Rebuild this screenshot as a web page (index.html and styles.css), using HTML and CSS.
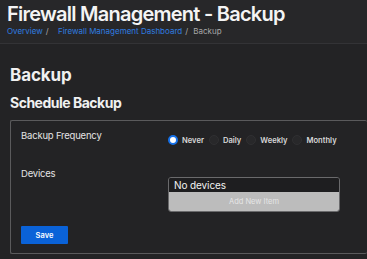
FILE: index.html
```html
<!DOCTYPE html>
<html lang="en">
<head>
    <meta charset="UTF-8">
    <meta name="viewport" content="width=device-width, initial-scale=1.0">
    <title>Firewall Management - Backup</title>
    <link rel="stylesheet" href="styles.css">
</head>
<body>
    <div class="head">
        <h1 class="title">Firewall Management - Backup</h1>
        <div class="crumbs">
            <a class="crumb-link">Overview</a><span class="sep first">/</span>
            <a class="crumb-link">Firewall Management Dashboard</a><span class="sep">/</span>
            <span class="crumb-current">Backup</span>
        </div>
    </div>

    <main class="content">
        <h2 class="page-title">Backup</h2>
        <h3 class="section-title">Schedule Backup</h3>

        <section class="card">
            <div class="row">
                <label class="row-label">Backup Frequency</label>
                <div class="radios">
                    <span class="radio checked"></span><span class="radio-text">Never</span>
                    <span class="radio"></span><span class="radio-text">Daily</span>
                    <span class="radio"></span><span class="radio-text">Weekly</span>
                    <span class="radio"></span><span class="radio-text">Monthly</span>
                </div>
            </div>

            <div class="row devices-row">
                <label class="row-label">Devices</label>
                <div class="device-box">
                    <div class="device-empty">No devices</div>
                    <div class="device-add">Add New Item</div>
                </div>
            </div>

            <button class="save-btn">Save</button>
        </section>
    </main>
</body>
</html>
```

FILE: styles.css
```css
body {
    font-family: Inter, "Liberation Sans", sans-serif;
    margin: 0;
    padding: 0;
    height: 100vh;
    background-color: #232325;
    color: #e8e8e8;
    overflow: hidden;
}
.head {
    background-color: #272729;
    border-bottom: 1px solid #333336;
    padding: 2px 7px 0;
    height: 41px;
}
.title {
    margin: 0;
    font-size: 20px;
    font-weight: 600;
    color: #f4f4f4;
    line-height: 24px;
    letter-spacing: -0.75px;
}
.crumbs {
    font-size: 8px;
    line-height: 10px;
    margin-top: 0;
}
.crumb-link {
    color: #2f7de0;
}
.sep {
    color: #aaa;
    margin: 0 3px 0 3px;
}
.sep.first {
    margin: 0 7px 0 3px;
}
.crumb-current {
    color: #a8a8a8;
}
.content {
    padding: 21px 0 0 10px;
}
.page-title {
    margin: 0;
    font-size: 17px;
    font-weight: 700;
    line-height: 20px;
    color: #f0f0f0;
    letter-spacing: -0.1px;
}
.section-title {
    margin: 9px 0 0;
    font-size: 14px;
    font-weight: 700;
    line-height: 18px;
    color: #f0f0f0;
    letter-spacing: -0.5px;
}
.card {
    margin-top: 8px;
    border: 1px solid #5a5a5c;
    border-right: none;
    border-radius: 2px;
    padding: 9px 0 7px 10px;
    box-sizing: border-box;
    height: 134px;
}
.row {
    display: flex;
    align-items: flex-start;
}
.row-label {
    width: 147px;
    font-size: 9.5px;
    line-height: 12px;
    color: #e4e4e4;
    letter-spacing: -0.2px;
}
.radios {
    display: flex;
    align-items: center;
    margin-top: 5px;
    font-size: 7.6px;
    font-weight: 600;
    color: #d8d8d8;
}
.radio {
    width: 10px;
    height: 10px;
    border-radius: 50%;
    background: #28282a;
    border: 1px solid #303032;
    box-sizing: border-box;
    margin-right: 4px;
}
.radio.checked {
    background: #fff;
    border: 2.5px solid #1570e8;
}
.radio-text {
    margin-right: 5px;
}
.devices-row {
    margin-top: 23px;
}
.device-box {
    margin-top: 9px;
    width: 170px;
    border: 1px solid #6a6a6c;
    border-radius: 3px;
    overflow: hidden;
}
.device-empty {
    background: #1e1e20;
    color: #f2f2f2;
    font-size: 10px;
    line-height: 14px;
    padding: 0 5px;
    letter-spacing: -0.1px;
}
.device-add {
    background: #bcbcbc;
    color: #e6e6e6;
    font-size: 7.5px;
    text-align: center;
    line-height: 19px;
}
.save-btn {
    display: block;
    margin-top: 14px;
    width: 47px;
    height: 18px;
    background-color: #0a62d8;
    color: #fff;
    border: none;
    border-radius: 1px;
    font-family: inherit;
    font-size: 7.5px;
    font-weight: 600;
    padding: 0;
}
```
